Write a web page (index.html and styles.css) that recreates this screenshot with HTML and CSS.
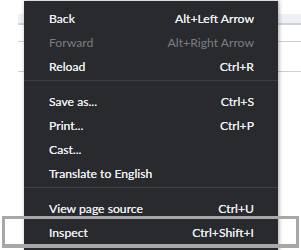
FILE: index.html
```html
<!doctype html>
<html lang="en">
<head>
	<meta charset="UTF-8">
	<title>Context menu</title>
	<link rel="stylesheet" href="styles.css">
</head>
<body>
	<div class="page">
		<div class="tab"></div>
		<div class="rule first"></div>
		<div class="rule"></div>
	</div>

	<div class="menu">
		<ul class="group">
			<li><span>Back</span><em>Alt+Left Arrow</em></li>
			<li class="off"><span>Forward</span><em>Alt+Right Arrow</em></li>
			<li><span>Reload</span><em>Ctrl+R</em></li>
		</ul>
		<div class="sep"></div>
		<ul class="group">
			<li><span>Save as...</span><em>Ctrl+S</em></li>
			<li><span>Print...</span><em>Ctrl+P</em></li>
			<li><span>Cast...</span></li>
			<li><span>Translate to English</span></li>
		</ul>
		<div class="sep"></div>
		<ul class="group">
			<li><span>View page source</span><em>Ctrl+U</em></li>
			<li><span>Inspect</span><em>Ctrl+Shift+I</em></li>
		</ul>
	</div>

	<!-- highlight round "Inspect" -->
	<div class="mark"></div>
</body>
</html>
```

FILE: styles.css
```css
*{margin:0; padding:0;}
li{list-style:none;}
em{font-style:normal;}

body{
	width:301px;
	height:250px;
	overflow:hidden;
	position:relative;
	background:#fff;
	font-family:"Segoe UI","Lato","Noto Sans",sans-serif;
}

/* page behind the menu */
.page{
	padding:14px 0 0 18px;
}
.tab{
	height:9px;
	background:#eef0f6;
	border-bottom:2px solid #cfd1db;
}
.rule{
	height:1px;
	background:#cfd0d4;
	margin-top:29px;
}
.rule.first{margin-top:16px;}

/* menu */
.menu{
	position:absolute;
	left:24px;
	top:1px;
	width:254px;
	height:260px;
	background:#292a2d;
	box-shadow:1px 0 4px rgba(0,0,0,0.35);
	padding-top:5px;
	box-sizing:border-box;
}
.group li{
	display:flex;
	justify-content:space-between;
	align-items:center;
	height:24px;
	padding:0 24px 0 25px;
	font-size:12.2px;
	color:#eceef1;
	text-shadow:0 0 0.3px #eceef1;
}
.group li.off span,
.group li.off em{color:#7c7e82; text-shadow:none;}
.sep{
	height:1px;
	background:#3f4043;
	margin:2px 0 8px 0;
}

.mark{
	position:absolute;
	left:2px;
	top:216px;
	width:291px;
	height:25px;
	border:3px solid #a7a7a7;
	border-bottom-width:4px;
}
```
